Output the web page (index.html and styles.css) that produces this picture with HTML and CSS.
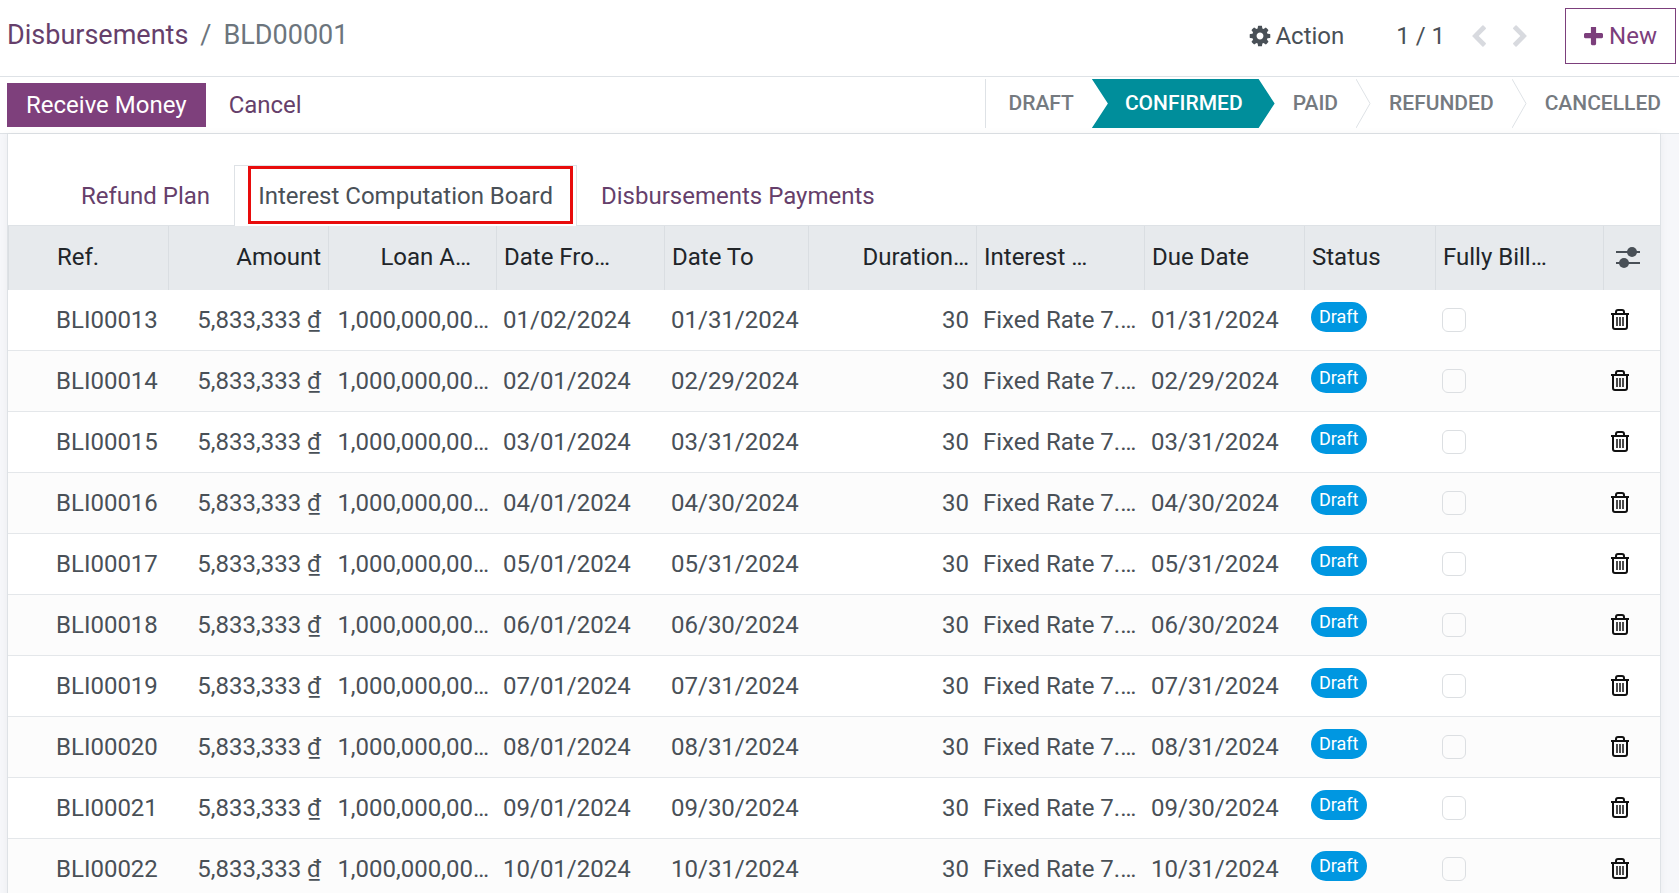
FILE: index.html
```html
<!DOCTYPE html>
<html lang="en">
<head>
    <meta charset="UTF-8">
    <meta name="viewport" content="width=device-width, initial-scale=1">
    <title>BLD00001 - Disbursements</title>
    <link rel="stylesheet" href="styles.css">
</head>
<body>
<!-- icons -->
<svg class="sprite" aria-hidden="true">
    <symbol id="cog" viewBox="0 0 1792 1792">
        <path d="M1152 896q0-106-75-181t-181-75-181 75-75 181 75 181 181 75 181-75 75-181zm512-109v222q0 12-8 23t-20 13l-185 28q-19 54-39 91 35 50 107 138 10 12 10 25t-9 23q-27 37-99 108t-94 71q-12 0-26-9l-138-108q-44 23-91 38-16 136-29 186-7 28-36 28h-222q-14 0-24.5-8.5t-11.5-21.5l-28-184q-49-16-90-37l-141 107q-10 9-25 9-14 0-25-11-126-114-165-168-7-10-7-23 0-12 8-23 15-21 51-66.5t54-70.5q-27-50-41-99l-183-27q-13-2-21-12.5t-8-23.5v-222q0-12 8-23t19-13l186-28q14-46 39-92-40-57-107-138-10-12-10-24 0-10 9-23 26-36 98.5-107.5t94.5-71.5q13 0 26 10l138 107q44-23 91-38 16-136 29-186 7-28 36-28h222q14 0 24.5 8.5t11.5 21.5l28 184q49 16 90 37l142-107q9-9 24-9 13 0 25 10 129 119 165 170 7 8 7 22 0 12-8 23-15 21-51 66.5t-54 70.5q26 50 41 98l183 28q13 2 21 12.5t8 23.5z"/>
    </symbol>
    <symbol id="plus" viewBox="192 192 1408 1408">
        <path d="M1600 736v192q0 40-28 68t-68 28h-416v416q0 40-28 68t-68 28h-192q-40 0-68-28t-28-68v-416h-416q-40 0-68-28t-28-68v-192q0-40 28-68t68-28h416v-416q0-40 28-68t68-28h192q40 0 68 28t28 68v416h416q40 0 68 28t28 68z"/>
    </symbol>
    <symbol id="chevron" viewBox="390 0 1056 1664">
        <path d="M1427 301l-531 531 531 531q19 19 19 45t-19 45l-166 166q-19 19-45 19t-45-19l-742-742q-19-19-19-45t19-45l742-742q19-19 45-19t45 19l166 166q19 19 19 45t-19 45z"/>
    </symbol>
    <symbol id="sliders" viewBox="0 0 24 22">
        <path d="M0 5h24M0 16h24" stroke="currentColor" stroke-width="2"/>
        <circle cx="16" cy="5" r="5"/>
        <circle cx="8" cy="16" r="5"/>
    </symbol>
    <symbol id="trash" viewBox="0 0 20 22">
        <path d="M1 5h18M6 5V3q0-2 2-2h4q2 0 2 2v2M3 5v13q0 2 2 2h10q2 0 2-2V5" fill="none" stroke="currentColor" stroke-width="2"/>
        <path d="M7 8v9M10 8v9M13 8v9" fill="none" stroke="currentColor" stroke-width="1.5"/>
    </symbol>
</svg>

<header class="control-panel">
    <nav class="breadcrumb">
        <a href="#">Disbursements</a>
        <span>/</span>
        <span>BLD00001</span>
    </nav>
    <button class="action" type="button"><svg class="icon"><use href="#cog"/></svg>Action</button>
    <div class="pager">
        <span>1 / 1</span>
        <button type="button" aria-label="Previous"><svg class="chevron"><use href="#chevron"/></svg></button>
        <button type="button" aria-label="Next"><svg class="chevron next"><use href="#chevron"/></svg></button>
    </div>
    <button class="btn-new" type="button"><svg class="plus"><use href="#plus"/></svg>New</button>
</header>

<div class="statusbar">
    <button class="btn btn-primary" type="button">Receive Money</button>
    <button class="btn btn-link" type="button">Cancel</button>
    <div class="steps">
        <button class="step first" type="button">DRAFT</button>
        <button class="step current" type="button">CONFIRMED</button>
        <button class="step" type="button">PAID</button>
        <svg class="arrow" viewBox="0 0 15 49"><path d="M0 0l14 24.5L0 49"/></svg>
        <button class="step" type="button">REFUNDED</button>
        <svg class="arrow" viewBox="0 0 15 49"><path d="M0 0l14 24.5L0 49"/></svg>
        <button class="step" type="button">CANCELLED</button>
    </div>
</div>

<main class="sheet">
    <nav class="tabs">
        <a class="tab" href="#">Refund Plan</a>
        <a class="tab active" href="#">Interest Computation Board</a>
        <a class="tab" href="#">Disbursements Payments</a>
    </nav>
    <table class="list">
        <colgroup>
            <col class="col-ref"><col class="col-ref"><col class="col-wide"><col class="col-wide">
            <col class="col-to"><col class="col-wide"><col class="col-wide"><col class="col-ref">
            <col class="col-status"><col class="col-wide"><col class="col-tools">
        </colgroup>
        <thead>
        <tr>
            <th class="ref">Ref.</th>
            <th class="num">Amount</th>
            <th class="num loan">Loan A…</th>
            <th>Date Fro…</th>
            <th>Date To</th>
            <th class="num">Duration…</th>
            <th>Interest …</th>
            <th>Due Date</th>
            <th>Status</th>
            <th>Fully Bill…</th>
            <th class="tools"><button type="button" aria-label="Columns"><svg class="sliders"><use href="#sliders"/></svg></button></th>
        </tr>
        </thead>
        <tbody class="rows"></tbody>
    </table>
</main>
<script src="script.js"></script>
</body>
</html>
```

FILE: styles.css
```css
* {
    box-sizing: border-box;
}
body {
    margin: 0;
    height: 100vh;
    overflow: hidden;
    display: flex;
    flex-direction: column;
    background-color: #f6f7fa;
    color: #495057;
    font-family: Roboto, "Noto Sans", sans-serif;
    font-size: 24px;
    line-height: 36px;
}
a {
    color: #663f6b;
    text-decoration: none;
}
button {
    margin: 0;
    padding: 0;
    border: 0;
    background: none;
    color: inherit;
    font: inherit;
    cursor: pointer;
}
svg {
    display: block;
    fill: currentColor;
}
.sprite {
    position: absolute;
    width: 0;
    height: 0;
}

/* top bar */
.control-panel {
    display: flex;
    align-items: center;
    flex: none;
    padding: 8px 3px 12px 7px;
    background-color: #fff;
    border-bottom: 1px solid #dee2e6;
}
.breadcrumb {
    display: flex;
    gap: 12px;
    margin-right: auto;
    font-size: 27px;
    line-height: 34px;
    padding-bottom: 2px;
    color: #6c757d;
}
.action {
    display: flex;
    align-items: center;
    gap: 3px;
    margin-right: 52px;
}
.icon {
    width: 24px;
    height: 24px;
}
.pager {
    display: flex;
    align-items: center;
    gap: 27px;
    margin-right: 38px;
}
.chevron {
    width: 14px;
    height: 22px;
    color: #d8dadf;
}
.next {
    transform: scaleX(-1);
}
.btn-new {
    display: flex;
    align-items: center;
    gap: 6px;
    height: 56px;
    padding: 0 18px;
    border: 1px solid #7c3f7c;
    color: #7c3f7c;
}
.plus {
    width: 19px;
    height: 19px;
}

/* buttons and stages */
.statusbar {
    display: flex;
    align-items: center;
    flex: none;
    height: 57px;
    padding-left: 7px;
    background-color: #fff;
    border-bottom: 1px solid #dee2e6;
}
.btn {
    height: 44px;
    padding: 0 19px;
}
.btn-primary {
    background-color: #7e407c;
    color: #fff;
}
.btn-link {
    color: #663f6b;
    margin-left: 4px;
}
.steps {
    display: flex;
    align-self: flex-start;
    height: 49px;
    margin: 2px 0 0 auto;
    color: #757a80;
    font-size: 21px;
    font-weight: 500;
}
.step {
    padding: 0 18px 2px;
}
.step.first {
    padding-left: 22px;
    border-left: 1px solid #dee2e6;
}
.step.current {
    padding: 0 32px 2px 33px;
    background-color: #008e9b;
    color: #fff;
    clip-path: polygon(0 0, calc(100% - 16px) 0, 100% 50%, calc(100% - 16px) 100%, 0 100%, 16px 50%);
}
.arrow {
    width: 15px;
    height: 49px;
    fill: none;
    stroke: #dee2e6;
}

/* form sheet */
.sheet {
    flex: 1;
    margin: 0 18px 0 7px;
    background-color: #fff;
    border: 1px solid #dee2e6;
    border-width: 0 1px;
    box-shadow: 0 0 8px rgba(0, 0, 0, 0.05);
}
.tabs {
    display: flex;
    padding: 31px 0 0 49px;
    border-bottom: 1px solid #dee2e6;
}
.tab {
    height: 60px;
    padding: 12px 23px;
    border: 1px solid transparent;
    border-bottom: 0;
}
.tab.active {
    position: relative;
    height: 61px;
    margin-bottom: -1px;
    background-color: #fff;
    border-color: #dee2e6;
    color: #495057;
}
/* red frame over the open tab */
.tab.active::after {
    content: "";
    position: absolute;
    inset: 0 3px 2px 13px;
    border: 3px solid #e80c0c;
}

/* list */
.list {
    width: 100%;
    table-layout: fixed;
    border-collapse: separate;
    border-spacing: 0;
}
.col-ref {
    width: 160px;
}
.col-wide {
    width: 168px;
}
.col-to {
    width: 144px;
}
.col-status {
    width: 131px;
}
.col-tools {
    width: 57px;
}
th, td {
    padding: 0 7px;
    text-align: left;
    white-space: nowrap;
    overflow: hidden;
}
th {
    height: 64px;
    padding-bottom: 2px;
    background-color: #e7eaed;
    border-left: 1px solid #dadee2;
    color: #212529;
    font-weight: 400;
}
td {
    height: 61px;
    border-bottom: 1px solid #e4e7ea;
}
tbody tr:nth-child(even) {
    background-color: #fcfcfc;
}
.ref {
    padding-left: 48px;
    padding-right: 0;
}
.num {
    text-align: right;
}
.loan {
    padding-right: 25px;
}
.tools {
    padding: 0 12px;
}
th button, td button {
    display: block;
}
.trash {
    width: 20px;
    height: 22px;
    color: #111;
}
.sliders {
    width: 24px;
    height: 22px;
    color: #495057;
}
.badge {
    display: block;
    width: fit-content;
    height: 30px;
    margin-bottom: 6px;
    padding: 0 8px;
    border-radius: 15px;
    background-color: #0097e1;
    color: #fff;
    font-size: 18px;
    line-height: 30px;
}
.check {
    display: block;
    appearance: none;
    width: 24px;
    height: 24px;
    margin: 0;
    border: 1px solid #dcdfe2;
    border-radius: 6px;
}
```

FILE: script.js
```js
// from, to
var periods = [
    ["01/02/2024", "01/31/2024"],
    ["02/01/2024", "02/29/2024"],
    ["03/01/2024", "03/31/2024"],
    ["04/01/2024", "04/30/2024"],
    ["05/01/2024", "05/31/2024"],
    ["06/01/2024", "06/30/2024"],
    ["07/01/2024", "07/31/2024"],
    ["08/01/2024", "08/31/2024"],
    ["09/01/2024", "09/30/2024"],
    ["10/01/2024", "10/31/2024"]
];
var html = "";
for (var i = 0; i < periods.length; i++) {
    var ref = "BLI000" + (13 + i);
    html += `<tr>
        <td class="ref">${ref}</td>
        <td class="num">5,833,333 ₫</td>
        <td class="num">1,000,000,00…</td>
        <td>${periods[i][0]}</td>
        <td>${periods[i][1]}</td>
        <td class="num">30</td>
        <td>Fixed Rate 7.…</td>
        <td>${periods[i][1]}</td>
        <td><span class="badge">Draft</span></td>
        <td><input class="check" type="checkbox" aria-label="${ref} fully billed"></td>
        <td><button type="button" aria-label="Delete ${ref}"><svg class="trash"><use href="#trash"/></svg></button></td>
    </tr>`;
}
document.querySelector(".rows").innerHTML = html;
```
